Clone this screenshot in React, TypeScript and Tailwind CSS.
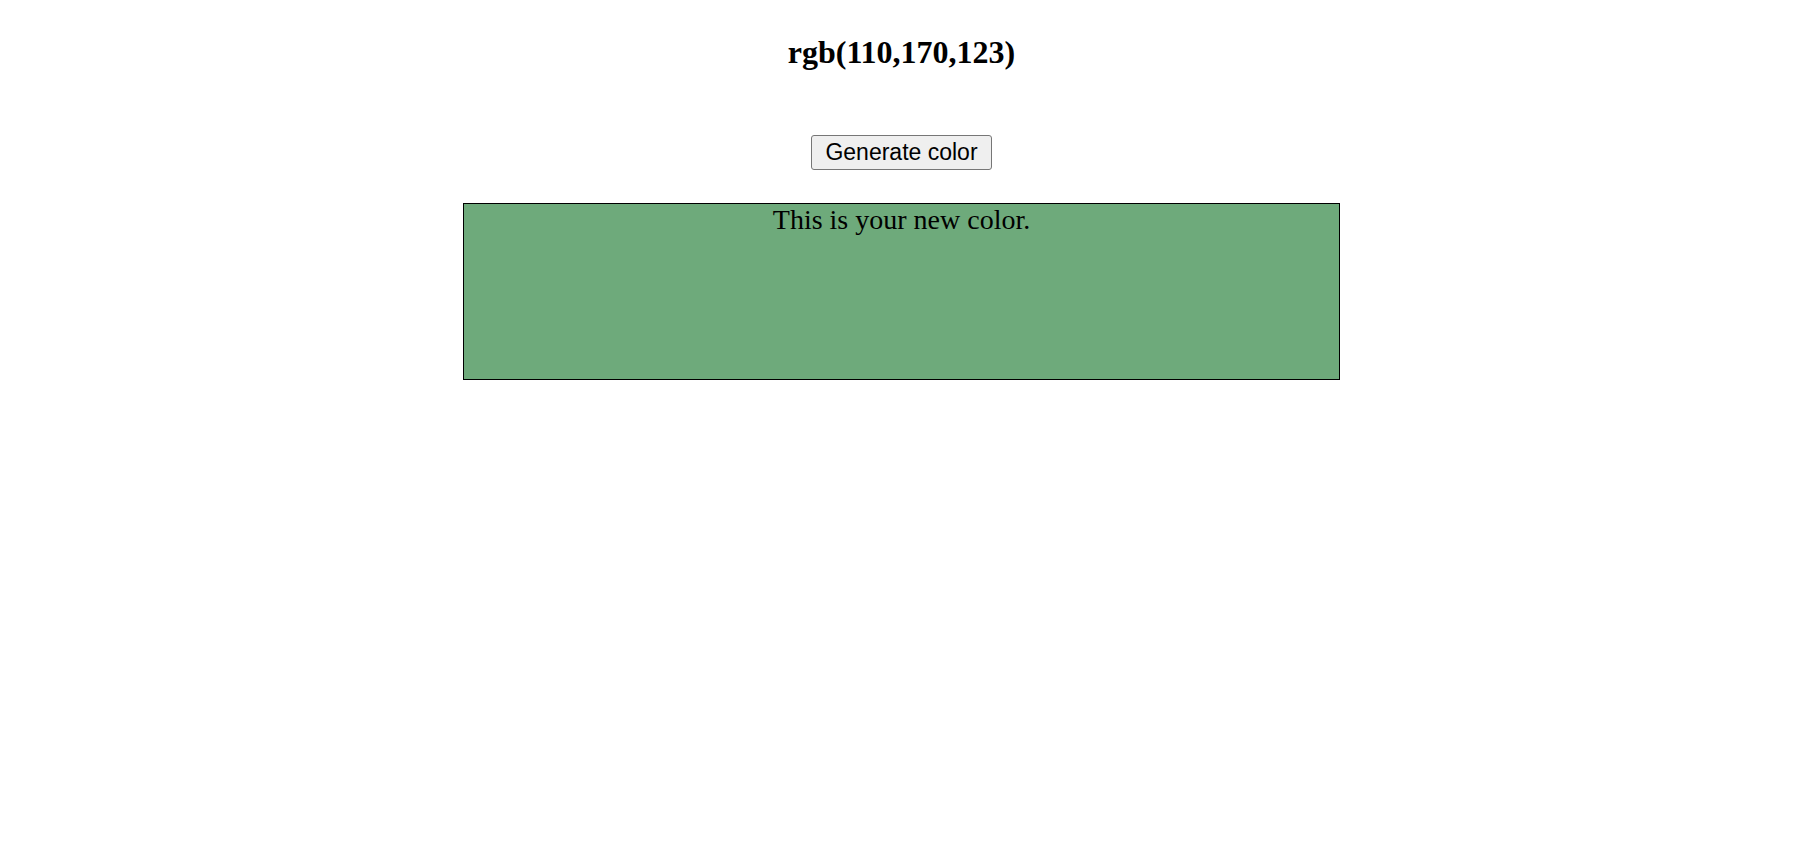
const color = { r: 110, g: 170, b: 123 };

export default function App() {
  const rgb = `rgb(${color.r},${color.g},${color.b})`;

  return (
    <div className="min-h-screen bg-white">
      <div className="w-[1803px] flex flex-col items-center">
        <h1 className="mt-[34px] text-[32px] font-bold leading-[normal] text-black font-['Liberation_Serif',serif]">
          {rgb}
        </h1>

        <button className="mt-[64px] h-[35px] px-[13px] bg-[#efefef] border border-[#767676] rounded-[3px] text-[23px] leading-none text-black font-['Liberation_Sans',Arial,sans-serif]">
          Generate color
        </button>

        {/* colour preview */}
        <div
          className="mt-[33px] w-[877px] h-[177px] border border-black text-center"
          style={{ backgroundColor: rgb }}
        >
          <p className="text-[28px] leading-[normal] text-black font-['Liberation_Serif',serif]">
            This is your new color.
          </p>
        </div>
      </div>
    </div>
  );
}
